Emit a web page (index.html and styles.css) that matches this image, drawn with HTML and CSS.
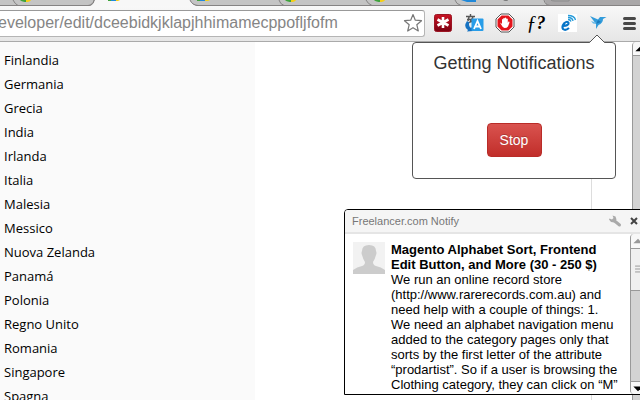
FILE: index.html
```html
<!DOCTYPE html>
<html lang="it">
<head>
<meta charset="utf-8">
<title>Freelancer.com Notify</title>
<link rel="stylesheet" href="styles.css">
</head>
<body>
<div class="browser">
  <svg class="tabs" height="6" aria-hidden="true">
    <rect width="100%" height="6" fill="#a9a7a8"/>
    <path d="M0 0H545Q545 5 550 5.500H0Z" fill="#c4c4c4"/>
    <path d="M551 0Q552 1 555 1H568Q570 1 569 0Z" fill="#c8c8c8" stroke="#8b8b8b"/>
    <path d="M0 5.500H90Q93 5 95 0M189 0Q192 5 196 5.500H2000" fill="none" stroke="#858383"/>
    <path d="M95 0Q93 6 89 6H197Q192 5 190 0Z" fill="#f7f7f7"/>
    <path d="M94 0Q93 5 88 5.500M190 0Q192 5 198 5.500" fill="none" stroke="#858383"/>
    <path d="M13 0Q15 4 18 5.500M279 0Q280 4 284 5.500M366 0Q368 4 372 5.500M455 0Q456 4 461 5.500M544 0Q545 5 550 5.500" fill="none" stroke="#858383"/>
    <g>
      <path d="M20 0H26L27 2Q22 2 20 0ZM285 0H291L292 2Q287 2 285 0ZM374 0H380L381 2Q376 2 374 0Z" fill="#3fa33c"/>
      <path d="M26 0H31Q30 2 26 2ZM291 0H296Q295 2 291 2ZM380 0H385Q384 2 380 2ZM115 0H120L118 1H115ZM203 0H210L208 1H204Z" fill="#f5cf18"/>
      <path d="M108 0H111V1H108ZM197 0H200V1H197Z" fill="#3fa33c"/>
      <path d="M111 0H116V1H111ZM200 0H205V1H200ZM461 0H476V2H467Z" fill="#2088d8"/>
    </g>
    <path d="M503 0H508Q507 1 503 0Z" fill="#333"/>
  </svg>
  <header class="toolbar">
    <div class="omnibox">
      <input class="address" type="text" aria-label="Address" value="eveloper/edit/dceebidkjklapjhhimamecppofljfofm">
      <button class="star" aria-label="Bookmark">
        <svg width="20" height="20" viewBox="0 0 20 20"><path d="M10 1.500L12.300 7.200L18.500 7.700L13.800 11.700L15.300 18L10 14.700L4.700 18L6.200 11.700L1.500 7.700L7.700 7.200Z" fill="#fff" stroke="#777" stroke-width="1.200" stroke-linejoin="round"/></svg>
      </button>
    </div>
    <nav class="extensions" aria-label="Extensions">
      <button class="ext" aria-label="Passwords">
        <svg width="20" height="20" viewBox="0 0 20 20"><defs><linearGradient id="red" x2="0" y2="1"><stop stop-color="#c91424"/><stop offset="1" stop-color="#7c0012"/></linearGradient></defs><rect x="1.500" y="1.500" width="17" height="17" rx="2" fill="url(#red)" stroke="#9b1623"/><path d="M10 4V15M4.500 6.500L15.500 12.500M15.500 6.500L4.500 12.500" stroke="#fff" stroke-width="2.600"/></svg>
      </button>
      <button class="ext" aria-label="Translate">
        <svg width="20" height="20" viewBox="0 0 20 20"><path d="M2 3.500H11M6.500 1V3.500M3 6.500H10M5 4L4 8M9 4L6 9L9.500 8" stroke="#555" stroke-width="1.400" fill="none"/><path d="M3 8Q-1 14 4 17L3 18.500L9 18V13L7 15Q4 13 5.500 9.500Z" fill="#1572c2"/><rect x="7.500" y="5.500" width="12" height="12.500" rx="1" fill="#289de8"/><path d="M10 16L13.500 8L17 16M11.500 13.500H15.500" stroke="#fff" stroke-width="1.800" fill="none"/></svg>
      </button>
      <button class="ext" aria-label="Block ads">
        <svg width="20" height="20" viewBox="0 0 20 20"><path d="M6 1H14L19 6V14L14 19H6L1 14V6Z" fill="#fff" stroke="#555"/><path d="M6.600 2.500H13.400L17.500 6.600V13.400L13.400 17.500H6.600L2.500 13.400V6.600Z" fill="#e4141b"/><path d="M5.500 9.500L7 11V6.500Q7.500 5.500 8.200 6.500V9V5.500Q9 4.500 9.700 5.500V9V5Q10.500 4 11.300 5V9V6Q12 5 12.800 6V10L13.500 8.500Q14.500 8 14.500 9.500L13 13.500Q12 15 9.500 15Q7.500 14.500 5.500 10.500Z" fill="#fff"/></svg>
      </button>
      <button class="ext font-ext" aria-label="What font"><i>ƒ</i>?</button>
      <button class="ext" aria-label="Feed">
        <svg width="20" height="20" viewBox="0 0 20 20"><rect x="1" y="1" width="19" height="18" fill="#fff"/><path d="M6 13Q12 12.500 11.500 10Q10.500 7.500 7.500 10Q4.500 13.500 6 16Q8.500 18 12 15" fill="none" stroke="#0876c9" stroke-width="2.200"/><path d="M11 6.500Q13.500 6.500 14 8.500M11 4.500Q15.500 4.500 16 8M11 2.500Q17.500 2.500 18.500 7" fill="none" stroke="#249ad9" stroke-width="1.300"/></svg>
      </button>
      <button class="ext" aria-label="Freelancer notify">
        <svg width="20" height="20" viewBox="0 0 20 20"><path d="M2 3L10 6.500L12 4L18.500 4L15 6Q15 10 10.500 12L8 16L8 11Z" fill="#329cdb"/><path d="M3 8L9 10L8 11L5 10.500Z" fill="#69b9e7"/><path d="M10 7L13 9L8 11Z" fill="#1979bd"/></svg>
      </button>
      <button class="ext" aria-label="Menu">
        <svg width="20" height="20" viewBox="0 0 20 20"><path d="M5.500 5.500H15.500M5.500 10.500H15.500M5.500 15.500H15.500" stroke="#484848" stroke-width="3" stroke-linecap="round"/></svg>
      </button>
    </nav>
  </header>

  <main class="page">
    <ul class="countries">
      <li>Finlandia</li><li>Germania</li><li>Grecia</li><li>India</li><li>Irlanda</li><li>Italia</li><li>Malesia</li><li>Messico</li><li>Nuova Zelanda</li><li>Panamá</li><li>Polonia</li><li>Regno Unito</li><li>Romania</li><li>Singapore</li><li>Spagna</li>
    </ul>
    <div class="content"></div>
    <div class="page-scroll"><svg class="cap" width="14" height="14" viewBox="0 0 14 14"><path d="M2 10L7 5L12 10Z" fill="#000"/></svg></div>
  </main>

  <section class="popup">
    <svg class="pointer" width="18" height="10" viewBox="0 0 18 10"><path d="M0 9H1L9 1L17 9H18V10H0Z" fill="#fff"/><path d="M0 8.500H1.500L9 1L16.500 8.500H18" fill="none" stroke="#555"/></svg>
    <h1>Getting Notifications</h1>
    <button class="stop">Stop</button>
  </section>

  <section class="notice">
    <header class="notice-head">
      <span class="notice-title">Freelancer.com Notify</span>
      <button class="tool" aria-label="Settings"><svg width="14" height="14" viewBox="0 0 14 14"><path d="M6 6.500L11.500 11" stroke="#aaa" stroke-width="3" stroke-linecap="round"/><path d="M4.500 1.500L7.500 2.500L8.500 5.500L6.500 8.500L3 8L1 5.500L1.500 4.500L4 5.500L5.500 4Z" fill="#aaa"/></svg></button>
      <button class="tool" aria-label="Close"><svg width="14" height="14" viewBox="0 0 14 14"><path d="M4 4L10 10M10 4L4 10" stroke="#444" stroke-width="2"/></svg></button>
    </header>
    <div class="notice-body">
      <svg class="avatar" width="32" height="32" viewBox="0 0 32 32"><rect width="32" height="32" fill="#f2f2f2"/><path d="M0 32V28Q4 25 9 24Q12 23 12 20Q10 17 9 13Q8 11 9 9Q9 3 16 3Q23 3 23 9Q24 11 23 13Q22 17 20 20Q20 23 23 24Q28 25 32 28V32Z" fill="#ccc"/></svg>
      <div class="message">
        <h2>Magento Alphabet Sort, Frontend<br>Edit Button, and More (30 - 250 $)</h2>
        <p>We run an online record store<br>(http://www.rarerecords.com.au) and<br>need help with a couple of things: 1.<br>We need an alphabet navigation menu<br>added to the category pages only that<br>sorts by the first letter of the attribute<br>“prodartist”. So if a user is browsing the<br>Clothing category, they can click on “M”</p>
      </div>
      <div class="notice-scroll">
        <svg class="cap" width="14" height="15" viewBox="0 0 14 15"><path d="M2 10L7 5L12 10Z" fill="#999"/></svg>
        <svg class="thumb" width="14" height="42" viewBox="0 0 14 42"><path d="M4 17.500H11M4 20.500H11M4 23.500H11" stroke="#999"/></svg>
        <svg class="cap foot" width="14" height="13" viewBox="0 0 14 13"><path d="M2 5H12L7 10Z" fill="#000"/></svg>
      </div>
    </div>
  </section>
</div>
</body>
</html>
```
FILE: styles.css
```css
* { box-sizing: border-box; }

body {
  margin: 0;
  background: #fff;
  color: #000;
  font-family: "Liberation Sans", Arial, sans-serif;
}

button {
  padding: 0;
  border: 0;
  background: none;
  font-family: inherit;
}

svg { display: block; flex: none; }

.browser {
  position: relative;
  display: flex;
  flex-direction: column;
  height: 100vh;
  overflow: hidden;
}

.tabs { width: 100%; }

.toolbar {
  display: flex;
  align-items: center;
  gap: 8px;
  flex: none;
  height: 36px;
  padding-bottom: 1px;
  background: linear-gradient(#f8f8f8, #e6e6e6);
  border-bottom: 1px solid #aaa;
}

.omnibox {
  display: flex;
  align-items: center;
  flex: 1;
  min-width: 0;
  height: 27px;
  margin-left: -2px;
  padding-right: 1px;
  background: #fff;
  border: 1px solid #b5b5b5;
  border-top-color: #999;
  border-left: 0;
  border-radius: 0 3px 3px 0;
}

.address {
  flex: 1;
  min-width: 0;
  padding: 0;
  border: 0;
  outline: 0;
  background: none;
  color: #858585;
  font: 16px/20px "Liberation Sans", Arial, sans-serif;
}

.extensions {
  display: flex;
  gap: 11px;
  margin-right: 1px;
}

.ext { width: 20px; height: 20px; }

.font-ext {
  display: flex;
  justify-content: center;
  font: bold 18px/20px "Liberation Serif", serif;
  font-style: italic;
  white-space: nowrap;
}

.font-ext i {
  font-size: 20px;
  font-weight: 400;
}

.page {
  display: flex;
  flex: 1;
  min-height: 0;
}

.countries {
  width: 255px;
  margin: 0;
  padding: 6px 4px;
  overflow: hidden;
  background: #fafafa;
  font: 13px/24px "Open Sans", sans-serif;
  list-style: none;
}

.content {
  flex: 1;
  margin-right: 40px;
  border-right: 1px solid #ddd;
}

.page-scroll {
  width: 8px;
  overflow: hidden;
  background: #d3d3d3;
  border-left: 1px solid #999;
  border-radius: 4px 0 0 0;
}

.cap {
  background: #f8f8f8;
  border-bottom: 1px solid #999;
}

.popup {
  position: absolute;
  top: 42px;
  right: 24px;
  display: flex;
  flex-direction: column;
  align-items: center;
  gap: 50px;
  width: 204px;
  padding: 10px 0 21px;
  background: #fff;
  border: 1px solid #555;
  border-radius: 4px;
}

.pointer {
  position: absolute;
  top: -9px;
  right: 9px;
}

.popup h1 {
  margin: 0;
  color: #333;
  font-size: 18px;
  font-weight: 400;
  line-height: 20px;
}

.stop {
  width: 55px;
  height: 34px;
  background: linear-gradient(#d9534f, #c12e2a);
  border: 1px solid #b92c28;
  border-radius: 4px;
  color: #fff;
  font-size: 14px;
  text-shadow: 0 -1px 0 rgba(0, 0, 0, .2);
}

.notice {
  position: absolute;
  right: -6px;
  bottom: 5px;
  width: 302px;
  overflow: hidden;
  background: #fff;
  border: 1px solid #000;
  border-radius: 4px 0 0 0;
}

.notice-head {
  display: flex;
  align-items: center;
  gap: 5px;
  height: 24px;
  padding: 0 4px 0 7px;
  background: #f5f5f5;
  border-bottom: 2px solid #e5e5e5;
}

.notice-title {
  flex: 1;
  color: #777;
  font-size: 11px;
}

.notice-body {
  display: flex;
  height: 160px;
  padding-left: 8px;
}

.avatar { margin-top: 8px; }

.message {
  flex: 1;
  padding: 8px 0 0 6px;
  font-size: 13px;
  line-height: 15px;
  white-space: nowrap;
}

.message h2 {
  margin: 0;
  font-size: inherit;
}

.message p { margin: 0; }

.notice-scroll {
  display: flex;
  flex-direction: column;
  width: 15px;
  overflow: hidden;
  background: #d3d3d3;
  border-left: 1px solid #999;
  border-radius: 4px 0 0 4px;
}

.thumb {
  background: #f0f0f0;
  border-bottom: 1px solid #999;
}

.foot {
  margin-top: auto;
  border-top: 1px solid #999;
  border-bottom: 0;
}
```
